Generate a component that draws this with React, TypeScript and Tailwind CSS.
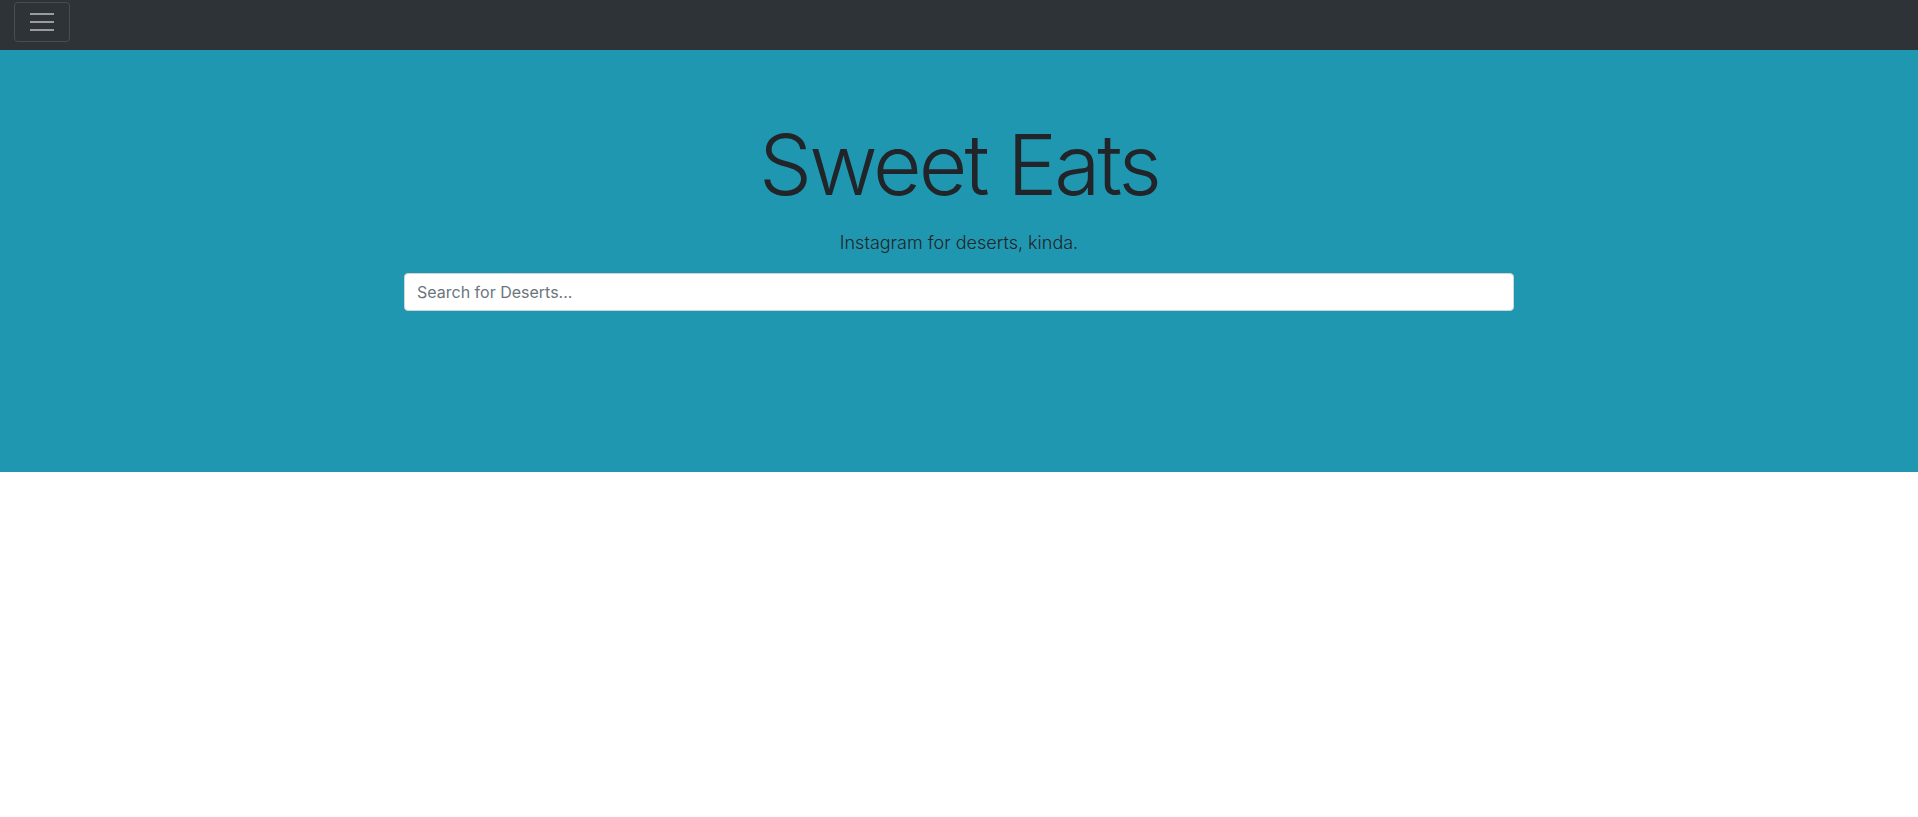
export default function App() {
  return (
    <div className="min-h-screen bg-white font-['Inter',sans-serif] text-[#212529]">
      {/* Top bar */}
      <nav className="h-[50px] bg-[#2e3338] flex items-start pt-[2px] px-[14px]">
        <button className="w-[56px] h-[40px] rounded-[4px] border border-[#484d52] flex items-center justify-center">
          <span className="flex flex-col gap-[6px]">
            <span className="block w-[24px] h-[2px] bg-[#9a9c9f]" />
            <span className="block w-[24px] h-[2px] bg-[#9a9c9f]" />
            <span className="block w-[24px] h-[2px] bg-[#9a9c9f]" />
          </span>
        </button>
      </nav>

      {/* Hero */}
      <section className="h-[422px] bg-[#2097b0] pt-[65px]">
        <div className="w-[1110px] mx-auto flex flex-col items-center">
          <h1 className="text-[84px] leading-[1.2] font-light tracking-[-3px]">Sweet Eats</h1>
          <p className="mt-[13px] text-[18px] leading-[1.5] font-light">Instagram for deserts, kinda.</p>
          <input
            type="text"
            placeholder="Search for Deserts..."
            className="mt-[17px] w-full h-[38px] rounded-[4px] border border-[#ced4da] bg-white px-[12px] text-[16px] text-[#495057] placeholder:text-[#6c757d] focus:outline-none"
          />
        </div>
      </section>
    </div>
  );
}
